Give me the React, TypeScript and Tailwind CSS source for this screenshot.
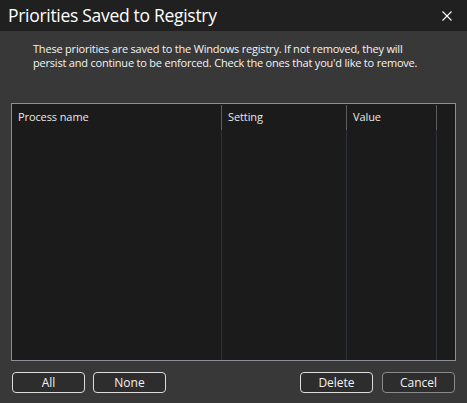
const columns = [
  { name: "Process name", width: "w-[210px]" },
  { name: "Setting", width: "w-[125px]" },
  { name: "Value", width: "w-[90px]" },
];

const DialogButton = ({ label, dim }: { label: string; dim?: boolean }) => (
  <button
    className={`w-[73px] h-[21px] rounded-[4px] border text-[12px] leading-none text-[#f2f2f2] bg-[#2d2d2d] ${
      dim ? "border-[#8a8a8a]" : "border-[#dcdcdc]"
    }`}
  >
    {label}
  </button>
);

export default function App() {
  return (
    <div
      className="w-[467px] h-[403px] flex flex-col bg-[#383838] text-[#f0f0f0]"
      style={{ fontFamily: '"Open Sans", "Noto Sans", sans-serif' }}
    >
      {/* Title bar */}
      <div className="h-[31px] bg-[#202020] flex items-center justify-between pl-[8px] pr-[15px]">
        <span className="text-[17.5px] leading-none tracking-[-0.3px] text-white">Priorities Saved to Registry</span>
        <svg width="10" height="10" viewBox="0 0 10 10" className="text-white">
          <path d="M0.5 0.5 L9.5 9.5 M9.5 0.5 L0.5 9.5" stroke="currentColor" strokeWidth="1.1" />
        </svg>
      </div>

      {/* Description */}
      <p className="pl-[33px] pr-[20px] pt-[11px] text-[11px] leading-[14px] text-[#f4f4f4] tracking-[-0.2px]">
        These priorities are saved to the Windows registry. If not removed, they will
        <br />
        persist and continue to be enforced. Check the ones that you'd like to remove.
      </p>

      {/* List */}
      <div className="mt-[33px] mx-[11px] h-[258px] border border-[#8c9096] bg-[#1b1b1b] flex">
        {columns.map((col) => (
          <div key={col.name} className={`${col.width} flex flex-col`}>
            <div className="h-[25px] flex items-center pl-[6px] text-[11px] tracking-[-0.1px] text-[#e8e8e8] border-r border-[#5c5c5c] mt-[1px]">
              {col.name}
            </div>
            <div className="flex-1 border-r border-[#2e333b]" />
          </div>
        ))}
        <div className="flex-1" />
      </div>

      {/* Buttons */}
      <div className="flex items-center px-[12px] mt-[11px]">
        <div className="flex gap-[8px]">
          <DialogButton label="All" />
          <DialogButton label="None" />
        </div>
        <div className="ml-auto flex gap-[9px]">
          <DialogButton label="Delete" />
          <DialogButton label="Cancel" dim />
        </div>
      </div>
    </div>
  );
}
